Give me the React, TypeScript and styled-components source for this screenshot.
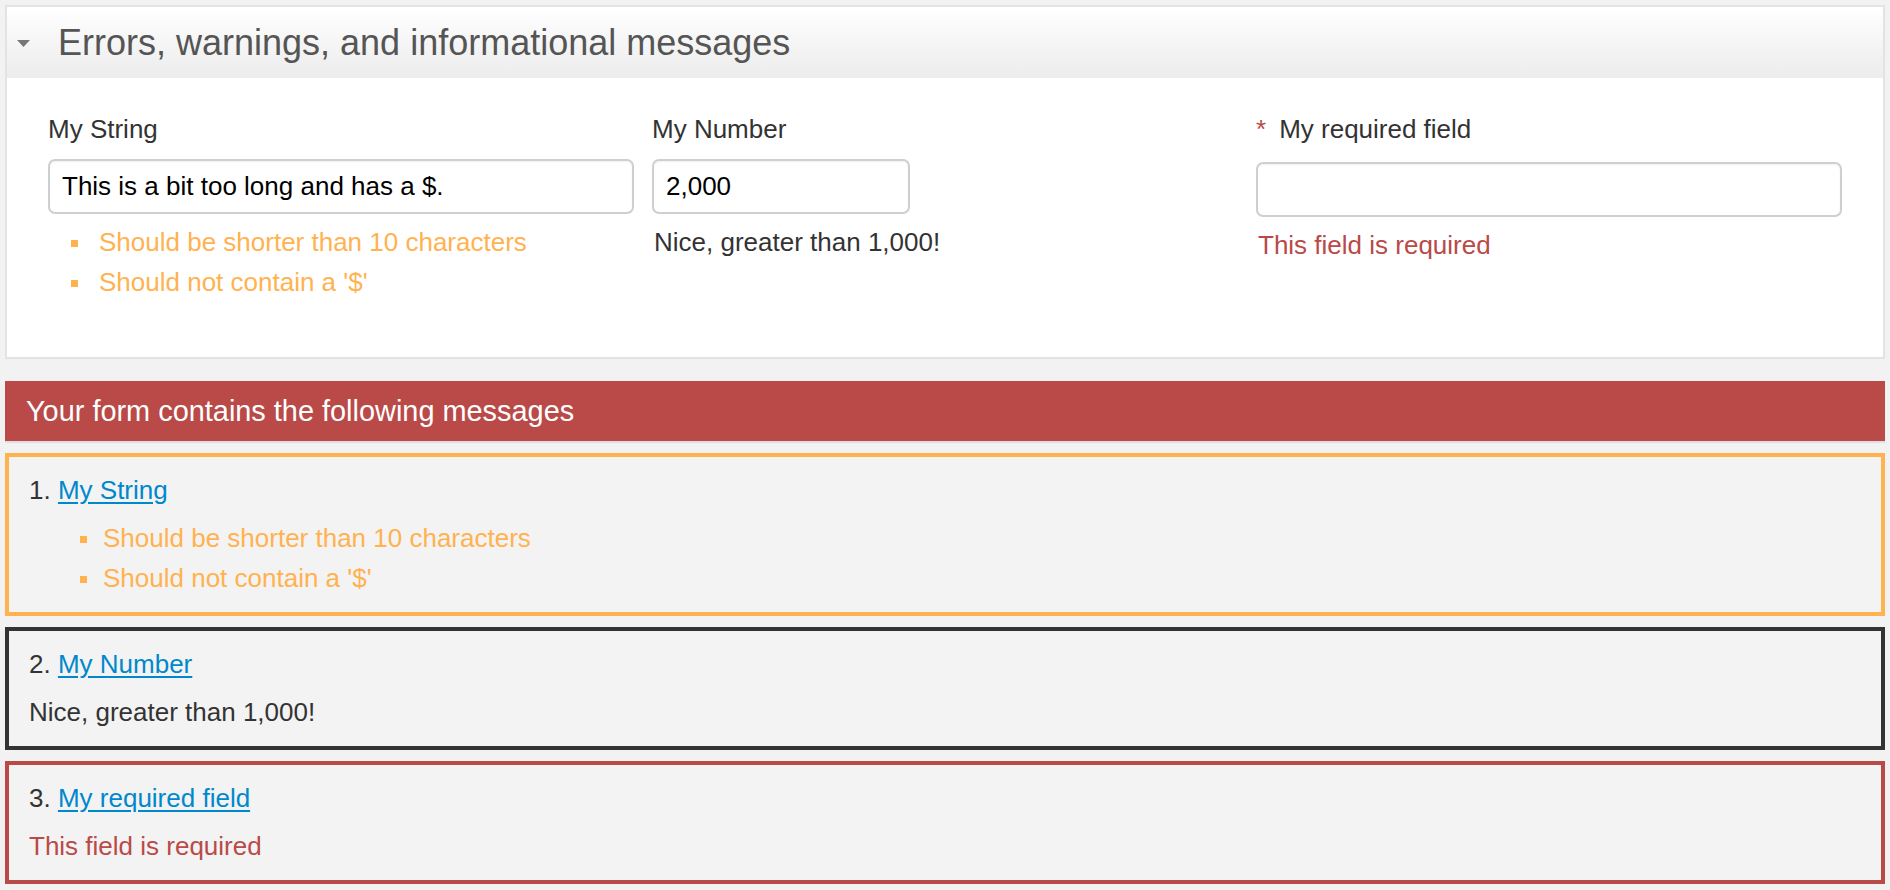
import React from "react";
import styled, { createGlobalStyle } from "styled-components";

const GlobalStyle = createGlobalStyle`
  html, body { background: #f2f2f2; }
  body {
    margin: 5px;
    font-family: "Liberation Sans", Arial, Helvetica, sans-serif;
    color: #333;
  }
  * { box-sizing: border-box; }
`;

const ORANGE = "#ffb24f";
const RED = "#b94a48";
const DARK = "#333333";
const LINK = "#0088cc";

const Panel = styled.section`
  background: #fff;
  border: 2px solid #e3e3e3;
`;

const PanelHeader = styled.header`
  height: 71px;
  display: flex;
  align-items: center;
  padding-left: 10px;
  background: linear-gradient(to bottom, #ffffff 0%, #ececec 100%);
`;

const Caret = styled.svg`
  width: 13px;
  height: 7px;
  margin-right: 28px;
  margin-top: 2px;
  flex: none;
`;

const Title = styled.h2`
  margin: 0;
  font-size: 36px;
  font-weight: 400;
  color: #555;
  line-height: 1;
`;

const PanelBody = styled.div`
  display: grid;
  grid-template-columns: repeat(3, 1fr);
  column-gap: 18px;
  padding: 33px 41px 55px;
`;

const Field = styled.div`
  display: flex;
  flex-direction: column;
  align-items: flex-start;
`;

const Label = styled.label`
  font-size: 26px;
  line-height: 36px;
  color: #333;
  display: flex;
  align-items: baseline;
`;

const Asterisk = styled.span`
  color: ${RED};
  margin-right: 13px;
`;

const Input = styled.input<{ $narrow?: boolean; $required?: boolean }>`
  margin-top: ${(p) => (p.$required ? 15 : 12)}px;
  width: ${(p) => (p.$narrow ? "258px" : "100%")};
  height: 55px;
  border: 2px solid #cfcfcf;
  border-radius: 7px;
  padding: 0 12px;
  font-family: "Liberation Sans", Arial, Helvetica, sans-serif;
  font-size: 26px;
  color: #000;
  background: #fff;
  box-shadow: inset 0 1px 2px rgba(0, 0, 0, 0.06);
  outline: none;
`;

const toneColor = (tone: string) =>
  tone === "warning" ? ORANGE : tone === "error" ? RED : DARK;

const Note = styled.div<{ $tone: string; $indent?: number }>`
  font-size: 26px;
  line-height: 40px;
  color: ${(p) => toneColor(p.$tone)};
  padding-left: ${(p) => p.$indent ?? 0}px;
`;

const Bullets = styled.ul<{ $indent: number }>`
  list-style: none;
  margin: 0;
  padding: 0 0 0 ${(p) => p.$indent}px;
  align-self: stretch;
`;

const Bullet = styled.li<{ $gap: number }>`
  display: flex;
  align-items: center;
  font-size: 26px;
  line-height: 40px;
  color: ${ORANGE};
  &::before {
    content: "";
    width: 7px;
    height: 7px;
    background: ${ORANGE};
    margin-right: ${(p) => p.$gap}px;
    margin-top: 3px;
    flex: none;
  }
`;

const NoteArea = styled.div`
  margin-top: 8px;
  align-self: stretch;
`;

const Banner = styled.div`
  margin-top: 22px;
  height: 60px;
  display: flex;
  align-items: center;
  padding-left: 21px;
  background: ${RED};
  color: #fff;
  font-size: 28.9px;
  box-shadow: 0 2px 0 #e0e0e0;
`;

const MessageList = styled.div`
  margin-top: 12px;
  display: flex;
  flex-direction: column;
  gap: 11px;
`;

const MessageBox = styled.div<{ $tone: string }>`
  border: 4px solid ${(p) => toneColor(p.$tone)};
  background: #f3f3f3;
  padding: 15px 20px 14px;
`;

const ItemHead = styled.div`
  font-size: 26px;
  line-height: 36px;
  color: #333;
  margin-bottom: 10px;
`;

const ItemLink = styled.a`
  color: ${LINK};
  text-decoration: underline;
  text-underline-offset: 3px;
`;

type Msg = { tone: "warning" | "info" | "error"; text: string };

const fields: { label: string; value: string; required?: boolean; narrow?: boolean; messages: Msg[] }[] = [
  {
    label: "My String",
    value: "This is a bit too long and has a $.",
    messages: [
      { tone: "warning", text: "Should be shorter than 10 characters" },
      { tone: "warning", text: "Should not contain a '$'" },
    ],
  },
  {
    label: "My Number",
    value: "2,000",
    narrow: true,
    messages: [{ tone: "info", text: "Nice, greater than 1,000!" }],
  },
  {
    label: "My required field",
    value: "",
    required: true,
    messages: [{ tone: "error", text: "This field is required" }],
  },
];

function renderMessages(messages: Msg[], bulletIndent: number, bulletGap: number, noteIndent: number) {
  if (messages.length > 1 || messages[0].tone === "warning") {
    return (
      <Bullets $indent={bulletIndent}>
        {messages.map((m) => (
          <Bullet key={m.text} $gap={bulletGap}>
            {m.text}
          </Bullet>
        ))}
      </Bullets>
    );
  }
  return (
    <Note $tone={messages[0].tone} $indent={noteIndent}>
      {messages[0].text}
    </Note>
  );
}

export default function App() {
  return (
    <>
      <GlobalStyle />
      <Panel>
        <PanelHeader>
          <Caret viewBox="0 0 13 7">
            <polygon points="0,0 13,0 6.5,7" fill="#777" />
          </Caret>
          <Title>Errors, warnings, and informational messages</Title>
        </PanelHeader>
        <PanelBody>
          {fields.map((f) => (
            <Field key={f.label}>
              <Label>
                {f.required && <Asterisk>*</Asterisk>}
                {f.label}
              </Label>
              <Input $narrow={f.narrow} $required={f.required} defaultValue={f.value} />
              <NoteArea>{renderMessages(f.messages, 23, 21, 2)}</NoteArea>
            </Field>
          ))}
        </PanelBody>
      </Panel>
      <Banner>Your form contains the following messages</Banner>
      <MessageList>
        {fields.map((f, i) => {
          const tone = f.messages[0].tone;
          return (
            <MessageBox key={f.label} $tone={tone}>
              <ItemHead>
                {i + 1}. <ItemLink href="#">{f.label}</ItemLink>
              </ItemHead>
              {renderMessages(f.messages, 51, 16, 0)}
            </MessageBox>
          );
        })}
      </MessageList>
    </>
  );
}
